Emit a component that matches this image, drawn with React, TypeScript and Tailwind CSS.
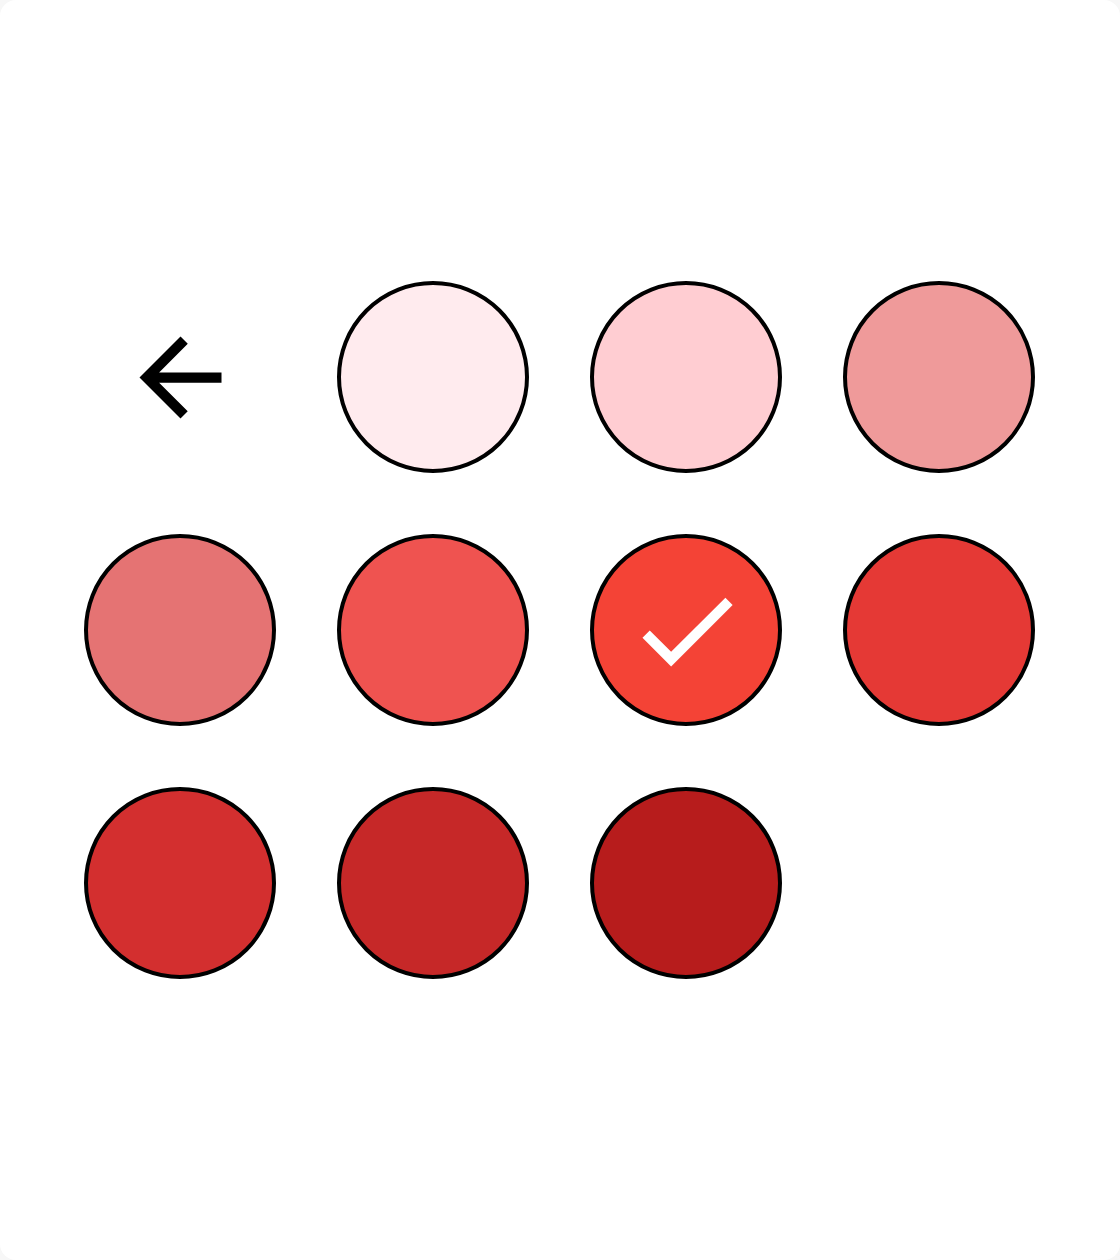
import React from 'react';

const SWATCHES = [
    { color: 'bg-[#ffebee]' },
    { color: 'bg-[#ffcdd2]' },
    { color: 'bg-[#ef9a9a]' },
    { color: 'bg-[#e57373]' },
    { color: 'bg-[#ef5350]' },
    { color: 'bg-[#f44336]', selected: true },
    { color: 'bg-[#e53935]' },
    { color: 'bg-[#d32f2f]' },
    { color: 'bg-[#c62828]' },
    { color: 'bg-[#b71c1c]' },
];

function BackIcon() {
    return (
        <svg viewBox="0 0 24 24" className="w-[123px] h-[123px] shrink-0 fill-black">
            <path d="M20 11H7.83l5.59-5.59L12 4l-8 8 8 8 1.41-1.41L7.83 13H20v-2z" />
        </svg>
    );
}

function CheckIcon() {
    return (
        <svg viewBox="0 0 24 24" className="w-[123px] h-[123px] shrink-0 fill-white">
            <path d="M9 16.17L4.83 12l-1.42 1.41L9 19 21 7l-1.41-1.41z" />
        </svg>
    );
}

export default function App() {
    return (
        <div className="w-[1120px] h-[1260px] bg-[#f7f7f7]">
            <div className="w-full h-full bg-white rounded-[16px] pr-px flex items-center justify-center">
                <div className="grid grid-cols-[repeat(4,192px)] gap-[61px]">
                    <button className="w-[192px] h-[192px] pl-px flex items-center justify-center">
                        <BackIcon />
                    </button>
                    {SWATCHES.map((swatch, i) => (
                        <button
                            key={i}
                            className={`w-[192px] h-[192px] pl-px rounded-full border-4 border-black flex items-center justify-center ${swatch.color}`}
                        >
                            {swatch.selected && <CheckIcon />}
                        </button>
                    ))}
                </div>
            </div>
        </div>
    );
}
